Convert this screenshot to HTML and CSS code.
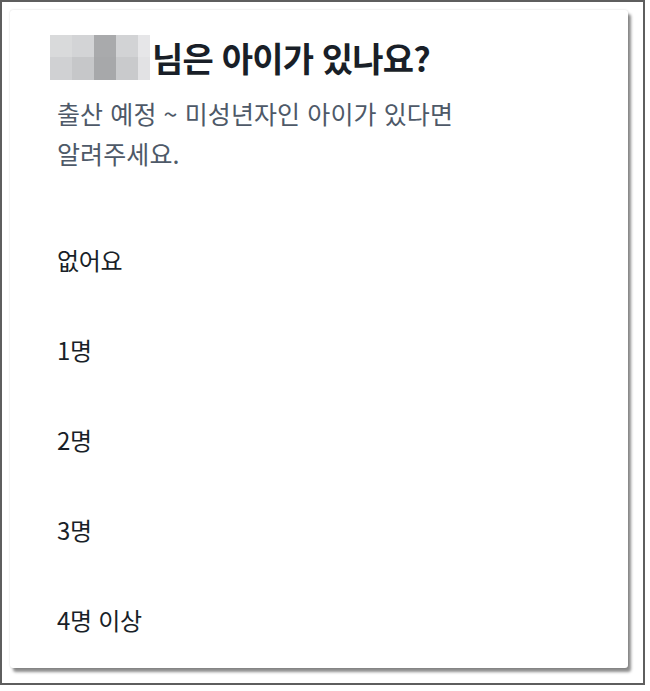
FILE: index.html
```html
<!DOCTYPE html>
<html lang="ko">
<head>
<meta charset="utf-8">
<link rel="stylesheet" href="styles.css">
</head>
<body>
<div class="frame">
  <div class="card">
    <div class="heading">
      <div class="blur" aria-hidden="true">
        <span class="px a1"></span><span class="px a2"></span><span class="px a3"></span><span class="px a4"></span><span class="px a5"></span>
        <span class="px b1"></span><span class="px b2"></span><span class="px b3"></span><span class="px b4"></span><span class="px b5"></span>
      </div>
      <h1 class="title">님은 아이가 있나요?</h1>
    </div>
    <p class="sub">출산 예정 ~ 미성년자인 아이가 있다면<br>알려주세요.</p>
    <ul class="options">
      <li class="opt">없어요</li>
      <li class="opt">1명</li>
      <li class="opt">2명</li>
      <li class="opt">3명</li>
      <li class="opt">4명 이상</li>
    </ul>
  </div>
</div>
</body>
</html>
```
FILE: styles.css
```css
html, body {
  margin: 0;
  padding: 0;
  background: #ffffff;
}
body {
  font-family: "Noto Sans CJK KR", "Noto Sans", sans-serif;
}
.frame {
  box-sizing: border-box;
  width: 645px;
  height: 685px;
  border: 2px solid #5e5e5e;
  padding: 8px;
  background: #ffffff;
}
.card {
  box-sizing: border-box;
  width: 618px;
  height: 658px;
  background: #ffffff;
  border-radius: 3px;
  box-shadow: 0 0 2px rgba(0,0,0,0.18), 3px 4px 3px rgba(0,0,0,0.45);
  padding: 25px 0 0 47px;
}
.heading {
  display: flex;
  align-items: center;
  height: 45px;
  margin-left: -7px;
}
.blur {
  display: grid;
  grid-template-columns: 22px 22px 22px 22px 12px;
  grid-template-rows: 22px 23px;
  width: 100px;
  height: 45px;
  flex: none;
}
.px { display: block; }
.a1 { background: #d9dadb; }
.a2 { background: #d3d4d6; }
.a3 { background: #a9aaac; }
.a4 { background: #d2d3d5; }
.a5 { background: #e6e6e8; }
.b1 { background: #d0d1d3; }
.b2 { background: #c6c7c9; }
.b3 { background: #a7a8aa; }
.b4 { background: #c9cacc; }
.b5 { background: #e2e2e4; }
.title {
  margin: 0 0 0 2px;
  font-size: 34px;
  font-weight: 700;
  letter-spacing: -0.8px;
  line-height: 45px;
  color: #191f28;
}
.sub {
  margin: 13px 0 0 0;
  font-size: 25px;
  line-height: 40px;
  color: #4e5968;
  letter-spacing: 0.1px;
}
.options {
  list-style: none;
  margin: 41px 0 0 0;
  padding: 0;
}
.opt {
  height: 90px;
  display: flex;
  align-items: center;
  font-size: 24px;
  color: #191f28;
  letter-spacing: -0.3px;
}
```
